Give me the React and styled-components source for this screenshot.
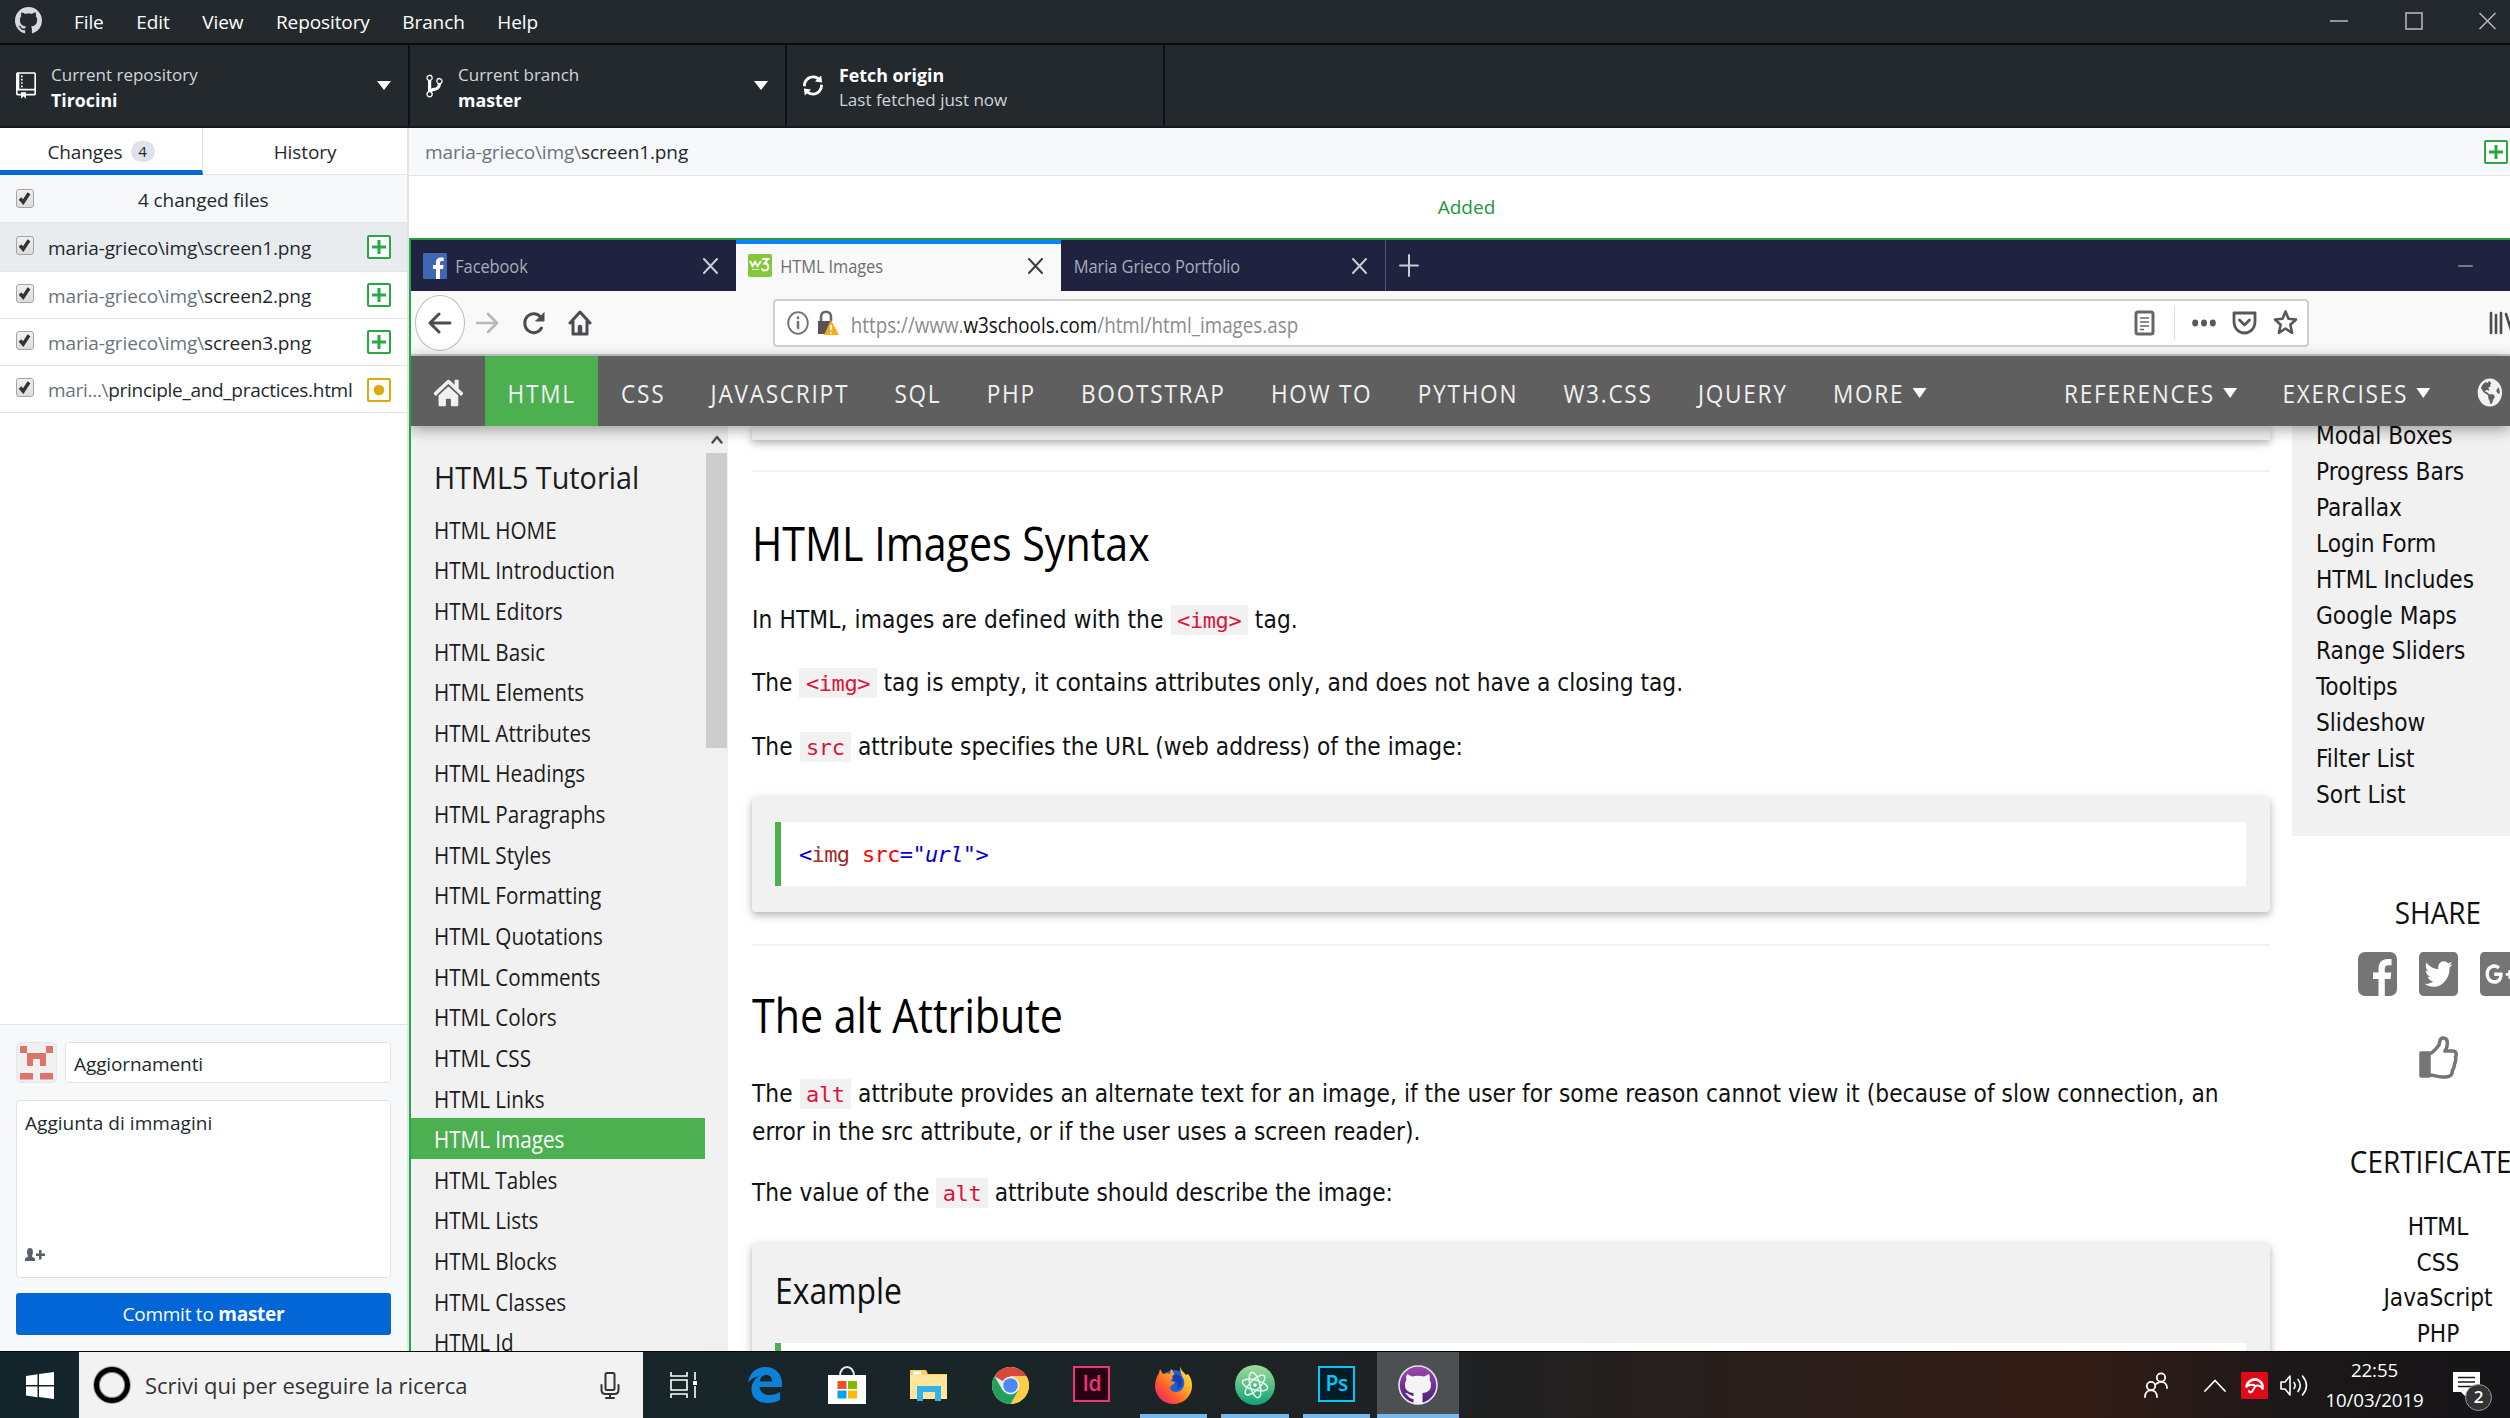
import React from "react";
import styled, { createGlobalStyle, css } from "styled-components";
import {
  FaTwitterSquare,
  FaGooglePlusSquare,
  FaHome,
  FaGlobeAmericas,
} from "react-icons/fa";

const GlobalStyle = createGlobalStyle`
  *, *::before, *::after { box-sizing: border-box; }
  body {
    margin: 0;
    overflow: hidden;
    font-family: "Open Sans", "Noto Sans", sans-serif;
    font-size: 19px;
    letter-spacing: -0.1px;
    color: #24292e;
    background: #fff;
  }
  p, h2, h3 { margin: 0; font-weight: 400; }
  svg { display: block; flex: none; }
`;

const narrow = (ratio) => css`
  display: block;
  white-space: nowrap;
  transform: scaleX(${ratio});
  transform-origin: 0 50%;
`;

/* ---------- shell ---------- */
const Screen = styled.div`
  width: 2510px;
  height: 1418px;
  display: flex;
  flex-direction: column;
  overflow: hidden;
`;
const TitleBar = styled.header`
  height: 45px;
  flex: none;
  display: flex;
  align-items: center;
  padding: 0 14px 2px 15px;
  background: #24292e;
  border-bottom: 2px solid #0b0d0f;
  color: #fff;
`;
const Menus = styled.nav`
  display: flex;
  gap: 32.6px;
  margin-left: 32px;
  padding-top: 2px;
  flex: 1;
`;
const WindowButtons = styled.div`
  display: flex;
  align-items: center;
  gap: 56.5px;
`;
const Toolbar = styled.div`
  height: 83px;
  flex: none;
  display: flex;
  background: #24292e;
  border-bottom: 2px solid #15191c;
  color: #fff;
`;
const ToolbarCell = styled.div`
  width: ${(p) => p.$width}px;
  display: flex;
  align-items: center;
  padding: 0 17px 0 16px;
  border-right: 2px solid #0f1214;
`;
const IconBox = styled.div`
  width: ${(p) => p.$width}px;
  display: flex;
`;
const CellText = styled.div`
  flex: 1;
  display: flex;
  flex-direction: column;
  padding-top: 4px;
  font-size: 17px;
  line-height: 24.5px;
  color: #d1d5da;
  letter-spacing: 0;
  strong { color: #fff; font-size: 17.8px; }
`;
const Caret = styled.i`
  width: 0;
  height: 0;
  border: ${(p) => p.$size || 7.5}px solid transparent;
  border-top: ${(p) => p.$drop || 9}px solid #fff;
  border-bottom: 0;
`;
const Body = styled.div`
  flex: 1;
  min-height: 0;
  display: flex;
`;

/* ---------- changes sidebar ---------- */
const Sidebar = styled.aside`
  width: 409px;
  flex: none;
  display: flex;
  flex-direction: column;
  border-right: 2px solid #e1e4e8;
`;
const Tabs = styled.div`
  height: 47px;
  flex: none;
  display: flex;
`;
const Tab = styled.div`
  width: ${(p) => (p.$active ? 203 : 204)}px;
  display: flex;
  align-items: center;
  justify-content: center;
  gap: 8px;
  padding-top: ${(p) => (p.$active ? 5.5 : 1)}px;
  border-right: ${(p) => (p.$active ? "1px solid #e1e4e8" : "0")};
  border-bottom: ${(p) => (p.$active ? "5px solid #0366d6" : "1px solid #e1e4e8")};
`;
const Count = styled.span`
  width: 24px;
  height: 21px;
  border-radius: 11px;
  background: #dfe2e8;
  font-size: 15px;
  line-height: 21px;
  text-align: center;
`;
const FileRow = styled.div`
  height: ${(p) => p.$height || 47.3}px;
  flex: none;
  display: flex;
  align-items: center;
  padding: ${(p) => p.$drop ?? 1}px 16px 0;
  border-bottom: 1.5px solid #e1e4e8;
  background: ${(p) => p.$bg || "#fff"};
`;
const Check = styled.span`
  width: 18px;
  height: 19px;
  margin: -4px 14px 0 0;
  border: 1.5px solid #a5a5a5;
  border-radius: 3px;
  background: linear-gradient(#f0f0f0, #dcdcdc);
`;
const FileName = styled.span`
  flex: 1;
  padding-top: 1px;
  white-space: nowrap;
  letter-spacing: ${(p) => p.$track ?? -0.12}px;
`;
const Dim = styled.span`
  color: #6a737d;
`;
const CountLabel = styled.span`
  flex: 1;
  padding-left: 90px;
`;
const StatusBox = styled.span`
  width: 24px;
  height: 24px;
  flex: none;
  display: flex;
  align-items: center;
  justify-content: center;
  border: 2px solid ${(p) => p.$color};
  border-radius: 2px;
  background: #fff;
`;
const Grow = styled.div`
  flex: 1;
`;
const CommitPanel = styled.div`
  height: 327px;
  flex: none;
  display: flex;
  flex-direction: column;
  padding: 17px 16px 16px;
  background: #f6f8fa;
  border-top: 1.5px solid #e1e4e8;
`;
const SummaryLine = styled.div`
  display: flex;
  gap: 8px;
`;
const Field = styled.div`
  border: 1.5px solid #dfe3e8;
  border-radius: 4px;
  background: #fff;
`;
const Summary = styled(Field)`
  flex: 1;
  height: 41px;
  padding: 2px 8px 0;
  line-height: 38px;
`;
const Description = styled(Field)`
  height: 178px;
  margin: 17px 0 15px;
  padding: 9px 8px 16px;
  display: flex;
  flex-direction: column;
  justify-content: space-between;
  letter-spacing: 0.04px;
`;
const CommitButton = styled.button`
  height: 42px;
  border: 0;
  border-radius: 3px;
  background: #0366d6;
  color: #fff;
  font: inherit;
  letter-spacing: -0.25px;
`;

/* ---------- file pane ---------- */
const Pane = styled.main`
  flex: 1;
  min-width: 0;
  display: flex;
  flex-direction: column;
`;
const PathBar = styled.div`
  height: 48px;
  flex: none;
  display: flex;
  align-items: center;
  padding: 0 2px 0 16px;
  background: #f6f8fa;
  border-bottom: 1.5px solid #e1e4e8;
`;
const AddedLabel = styled.div`
  height: 62px;
  flex: none;
  padding-left: 14px;
  text-align: center;
  line-height: 62px;
  color: #22963d;
  letter-spacing: 0;
`;
const Preview = styled.section`
  flex: 1;
  min-height: 0;
  display: flex;
  flex-direction: column;
  border-left: 2px solid #28a745;
  border-top: 2px solid #1f9b3b;
  overflow: hidden;
`;

/* ---------- browser chrome ---------- */
const TabStrip = styled.div`
  height: 51px;
  flex: none;
  display: flex;
  background: #202340;
  color: #a9abb8;
`;
const BrowserTab = styled.div`
  width: 325px;
  display: flex;
  align-items: center;
  padding: 0 18px 0 12px;
  border-right: ${(p) => (p.$edge ? "1.5px solid #55586e" : "0")};
  ${(p) =>
    p.$active &&
    css`
      background: #f9f9fa;
      color: #6d6d72;
      border-top: 4px solid #0a84ff;
      padding-bottom: 4px;
    `}
`;
const TabTitle = styled.span`
  flex: 1;
  padding-left: ${(p) => p.$pad}px;
  ${narrow(0.865)}
`;
const NewTab = styled.div`
  display: flex;
  flex: 1;
  align-items: center;
  justify-content: space-between;
  padding: 0 37px 0 13px;
`;
const AddressRow = styled.div`
  height: 65px;
  flex: none;
  display: flex;
  align-items: center;
  background: #f9f9fa;
  border-bottom: 2px solid #cfcfcf;
`;
const BackButton = styled.div`
  width: 50px;
  height: 56px;
  flex: none;
  margin-left: 4px;
  display: flex;
  align-items: center;
  justify-content: center;
  border: 1.5px solid #bdbdbd;
  border-radius: 50%;
  background: #fff;
`;
const NavIcons = styled.div`
  width: 308px;
  flex: none;
  display: flex;
  align-items: center;
  gap: 22.5px;
  padding-left: 10px;
`;
const AddressBox = styled.div`
  width: 1536px;
  height: 48px;
  flex: none;
  display: flex;
  align-items: center;
  padding: 0 9px 0 12px;
  border: 2px solid #d0d0d0;
  border-radius: 4px;
  background: #fff;
`;
const Url = styled.span`
  flex: 1;
  padding-left: 12px;
  padding-top: 4px;
  font-size: 21px;
  color: #8b8b8b;
  letter-spacing: 0;
  ${narrow(0.895)}
  b { font-weight: 400; color: #111; }
`;
const Divider = styled.i`
  width: 1px;
  height: 33px;
  margin: 0 17px 0 19px;
  background: #ddd;
`;
const LibrarySlot = styled.div`
  flex: none;
  margin-left: 180px;
`;

/* ---------- tutorial site ---------- */
const SiteNav = styled.nav`
  height: 70px;
  flex: none;
  position: relative;
  z-index: 1;
  background: #5f5f5f;
  box-shadow: 0 3px 14px rgba(0, 0, 0, 0.38);
`;
const SiteNavRow = styled.div`
  width: calc(100% / 0.87);
  height: 100%;
  display: flex;
  overflow: hidden;
  transform: scaleX(0.87);
  transform-origin: 0 0;
  font-size: 26px;
  font-kerning: none;
  letter-spacing: 2px;
  color: #f1f1f1;
  white-space: nowrap;
`;
const SiteNavItem = styled.div`
  flex: none;
  display: flex;
  align-items: center;
  gap: 9.5px;
  padding: 3px ${(p) => p.$pad ?? 26}px 0;
  margin-left: ${(p) => p.$gap || 0}px;
  background: ${(p) => (p.$active ? "#4caf50" : "none")};
`;
const Site = styled.div`
  flex: 1;
  min-height: 0;
  display: flex;
  overflow: hidden;
`;
const Chapters = styled.div`
  width: 294px;
  flex: none;
  padding-top: 28px;
  background: #f1f1f1;
  color: #1c1c1c;
`;
const ChaptersTitle = styled.h3`
  ${narrow(0.928)}
  margin: 0 0 8.6px 23px;
  font-size: 31px;
  line-height: 46px;
  letter-spacing: 0;
`;
const Chapter = styled.div`
  height: 40.65px;
  padding-left: 23px;
  background: ${(p) => (p.$active ? "#4caf50" : "none")};
  color: ${(p) => (p.$active ? "#fff" : "inherit")};
  span {
    ${narrow(0.88)}
    font-size: 23.5px;
    line-height: 43px;
    letter-spacing: -0.02px;
  }
`;
const ScrollTrack = styled.div`
  width: 23px;
  flex: none;
  display: flex;
  flex-direction: column;
  align-items: center;
  padding-top: 9px;
  background: #f0f0f0;
`;
const ScrollThumb = styled.i`
  width: 21px;
  height: 295px;
  margin-top: 9px;
  background: #cdcdcd;
`;
const Article = styled.article`
  width: 1518px;
  flex: none;
  margin-left: 24px;
  font-family: "DejaVu Sans Condensed", "DejaVu Sans", sans-serif;
  font-stretch: condensed;
  font-size: 24.2px;
  letter-spacing: 0;
  line-height: 38.4px;
  color: #111;
`;
const cardShadow = "0 3px 6px rgba(0,0,0,.2), 0 3px 13px rgba(0,0,0,.13)";
const CardEnd = styled.div`
  height: 14px;
  background: #f1f1f1;
  box-shadow: ${cardShadow};
`;
const Rule = styled.div`
  height: 2px;
  margin-top: ${(p) => p.$top}px;
  background: #f1f1f1;
`;
const Heading = styled.h2`
  ${narrow(0.857)}
  margin-top: ${(p) => p.$top}px;
  font-family: "Open Sans", sans-serif;
  font-stretch: normal;
  font-size: 48px;
  line-height: 72px;
  letter-spacing: 0;
  color: #000;
`;
const Para = styled.p`
  margin-top: ${(p) => p.$top ?? 25.3}px;
  letter-spacing: ${(p) => p.$track || 0}px;
  white-space: nowrap;
`;
const Code = styled.code`
  padding: 3px 6.5px 2px;
  font-family: "DejaVu Sans Mono", monospace;
  font-stretch: normal;
  font-size: 22px;
  line-height: 1;
  letter-spacing: -0.4px;
  color: #dc143c;
  background: #f1f1f1;
`;
const Card = styled.div`
  height: 115px;
  margin-top: ${(p) => p.$top}px;
  padding: ${(p) => p.$pad}px 24px 0 23px;
  border-radius: 4px;
  background: #f1f1f1;
  box-shadow: ${cardShadow};
`;
const CardTitle = styled.h3`
  ${narrow(0.885)}
  height: 79px;
  font-family: "Open Sans", sans-serif;
  font-stretch: normal;
  font-size: 36px;
  line-height: 54px;
  letter-spacing: 0;
`;
const Snippet = styled.div`
  height: 64px;
  padding-left: 18px;
  border-left: 6px solid #4caf50;
  background: #fff;
  font-family: "DejaVu Sans Mono", monospace;
  font-stretch: normal;
  font-size: 22px;
  line-height: 66px;
  letter-spacing: -0.65px;
  color: #0000cd;
`;
const TagName = styled.span`
  color: #a52a2a;
`;
const AttrName = styled.span`
  color: #f00;
`;
const Aside = styled.aside`
  width: 290px;
  flex: none;
  margin-left: 22px;
  font-family: "DejaVu Sans Condensed", "DejaVu Sans", sans-serif;
  font-stretch: condensed;
  font-size: 24.2px;
  line-height: 35.9px;
  letter-spacing: 0;
  color: #111;
`;
const HowToList = styled.div`
  height: 410px;
  padding: 0 0 22px 24px;
  background: #f1f1f1;
  overflow: hidden;
  display: flex;
  flex-direction: column;
  justify-content: flex-end;
  white-space: nowrap;
  div { flex: none; }
`;
const Centered = styled.div`
  display: flex;
  flex-direction: column;
  align-items: center;
  padding-left: 2px;
  line-height: 35.7px;
`;
const AsideTitle = styled.h3`
  margin-top: ${(p) => p.$top}px;
  font-family: "Open Sans", sans-serif;
  font-stretch: normal;
  font-size: 31px;
  line-height: 46px;
  letter-spacing: 0;
  transform: scaleX(0.9);
`;
const ShareRow = styled.div`
  display: flex;
  gap: 22px;
  margin: 17px 0 40px;
  color: #757575;
  svg { width: 39px; height: 44px; }
`;
const Certificates = styled.div`
  margin-top: 26px;
  display: flex;
  flex-direction: column;
  align-items: center;
`;

/* ---------- taskbar ---------- */
const Taskbar = styled.footer`
  height: 67px;
  flex: none;
  display: flex;
  border-top: 1.5px solid #050808;
  background: linear-gradient(90deg, #13252b 0, #1a2528 40%, #212122 60%, #301d17 78%, #331d16 83%, #1c1718 91%, #151517 100%);
  color: #fff;
`;
const StartButton = styled.div`
  width: 79px;
  display: flex;
  align-items: center;
  justify-content: center;
`;
const SearchBox = styled.div`
  width: 564px;
  display: flex;
  align-items: center;
  padding: 0 23px 0 15px;
  background: #f2f2f2;
  color: #333;
`;
const CortanaRing = styled.i`
  width: 36px;
  height: 36px;
  border: 5px solid #000;
  border-radius: 50%;
  box-shadow: inset 0 0 0 1px #888, 0 0 0 1px #aaa;
`;
const SearchHint = styled.span`
  flex: 1;
  padding-left: 15px;
  font-size: 22px;
  letter-spacing: -0.05px;
`;
const AppSlot = styled.div`
  width: 81.6px;
  display: flex;
  flex-direction: column;
  align-items: center;
  justify-content: center;
  background: ${(p) => (p.$focused ? "#4c5052" : "none")};
  box-shadow: ${(p) => (p.$focused ? "inset 0 -4px #76b9ed" : "none")};
  position: relative;
`;
const RunningMark = styled.i`
  position: absolute;
  left: 7px;
  right: 7px;
  bottom: 0;
  height: 4px;
  background: #76b9ed;
`;
const AdobeTile = styled.div`
  width: 37px;
  height: 36px;
  margin-bottom: 2px;
  border: 2px solid ${(p) => p.$ink};
  background: ${(p) => p.$paper};
  color: ${(p) => p.$ink};
  font-size: 21px;
  font-weight: 600;
  line-height: 30px;
  text-align: center;
  letter-spacing: -0.5px;
`;
const Tray = styled.div`
  flex: 1;
  display: flex;
  align-items: center;
  justify-content: flex-end;
`;
const TrayItem = styled.div`
  margin-left: ${(p) => p.$gap}px;
`;
const Clock = styled.div`
  width: 103px;
  margin-left: 15px;
  display: flex;
  flex-direction: column;
  align-items: center;
  font-size: 18.7px;
  line-height: 30px;
`;
const Notifications = styled.div`
  position: relative;
  margin: 0 30px 0 27px;
`;
const Badge = styled.span`
  position: absolute;
  left: 12px;
  top: 12px;
  width: 27px;
  height: 27px;
  border: 1.5px solid #9a9a9a;
  border-radius: 50%;
  background: #333;
  font-size: 17px;
  font-weight: 600;
  line-height: 23px;
  text-align: center;
`;

/* ---------- drawings ---------- */
const OCTOCAT =
  "M8 0C3.58 0 0 3.58 0 8c0 3.54 2.29 6.53 5.47 7.59.4.07.55-.17.55-.38 0-.19-.01-.82-.01-1.49-2.01.37-2.53-.49-2.69-.94-.09-.23-.48-.94-.82-1.13-.28-.15-.68-.52-.01-.53.63-.01 1.08.58 1.23.82.72 1.21 1.87.87 2.33.66.07-.52.28-.87.51-1.07-1.78-.2-3.64-.89-3.64-3.95 0-.87.31-1.59.82-2.15-.08-.2-.36-1.02.08-2.12 0 0 .67-.21 2.2.82.64-.18 1.32-.27 2-.27.68 0 1.36.09 2 .27 1.53-1.04 2.2-.82 2.2-.82.44 1.1.16 1.92.08 2.12.51.56.82 1.27.82 2.15 0 3.07-1.87 3.75-3.65 3.95.29.25.54.73.54 1.48 0 1.07-.01 1.93-.01 2.2 0 .21.15.46.55.38A8.013 8.013 0 0016 8c0-4.42-3.58-8-8-8z";
const REPO =
  "M4 9H3V8h1v1zm0-3H3v1h1V6zm0-2H3v1h1V4zm0-2H3v1h1V2zm8-1v12c0 .55-.45 1-1 1H6v2l-1.5-1.5L3 16v-2H1c-.55 0-1-.45-1-1V1c0-.55.45-1 1-1h10c.55 0 1 .45 1 1zm-1 10H1v2h2v-1h3v1h5v-2zm0-10H2v9h9V1z";
const BRANCH =
  "M10 5c0-1.11-.89-2-2-2a1.993 1.993 0 00-1 3.72v.3c-.02.52-.23.98-.63 1.38-.4.4-.86.61-1.38.63-.83.02-1.48.16-2 .45V4.72a1.993 1.993 0 00-1-3.72C.88 1 0 1.89 0 3a2 2 0 001 1.72v6.56c-.59.35-1 .99-1 1.72 0 1.11.89 2 2 2 1.11 0 2-.89 2-2 0-.53-.2-1-.53-1.36.09-.06.48-.41.59-.47.25-.11.56-.17.94-.17 1.05-.05 1.95-.45 2.75-1.25S8.95 7.77 9 6.73h-.02C9.59 6.37 10 5.73 10 5zM2 1.8c.66 0 1.2.55 1.2 1.2 0 .65-.55 1.2-1.2 1.2C1.35 4.2.8 3.65.8 3c0-.65.55-1.2 1.2-1.2zm0 12.41c-.66 0-1.2-.55-1.2-1.2 0-.65.55-1.2 1.2-1.2.65 0 1.2.55 1.2 1.2 0 .65-.55 1.2-1.2 1.2zm6-8c-.66 0-1.2-.55-1.2-1.2 0-.65.55-1.2 1.2-1.2.65 0 1.2.55 1.2 1.2 0 .65-.55 1.2-1.2 1.2z";
const SYNC =
  "M10.24 7.4a4.15 4.15 0 01-1.2 3.6 4.346 4.346 0 01-5.41.54L4.8 10.4.5 9.8l.6 4.2 1.31-1.26c2.36 1.74 5.7 1.57 7.84-.54a5.876 5.876 0 001.74-4.46l-1.75-.34zM2.96 5a4.346 4.346 0 015.41-.54L7.2 5.6l4.3.6-.6-4.2-1.31 1.26c-2.36-1.74-5.7-1.57-7.85.54C.5 5.03-.06 6.65.01 8.26l1.75.35A4.17 4.17 0 012.96 5z";

const Glyph = ({ w, h, box, color = "#fff", d }) => (
  <svg width={w} height={h} viewBox={box} fill={color}>
    <path d={d} />
  </svg>
);
const Line = ({ w, h, box, color = "#4c4c4f", width = 2, fill = "none", children }) => (
  <svg
    width={w}
    height={h}
    viewBox={box}
    preserveAspectRatio="none"
    fill={fill}
    stroke={color}
    strokeWidth={width}
    strokeLinecap="round"
    strokeLinejoin="round"
  >
    {children}
  </svg>
);
const Cross = ({ color }) => (
  <Line w={15} h={16} box="0 0 15 16" color={color}>
    <path d="M1 1l13 14M14 1L1 15" />
  </Line>
);
const CheckBox = () => (
  <Check>
    <svg width="15" height="16" viewBox="0 0 15 16" fill="none" stroke="#333" strokeWidth="3.4">
      <path d="M3 8.5l3.2 3.6L12 3.2" />
    </svg>
  </Check>
);
const Added = () => (
  <StatusBox $color="#28a745">
    <svg width="14" height="14" viewBox="0 0 14 14" stroke="#28a745" strokeWidth="3">
      <path d="M7 0v14M0 7h14" />
    </svg>
  </StatusBox>
);
const Modified = () => (
  <StatusBox $color="#dbab09">
    <svg width="12" height="12" viewBox="0 0 12 12" fill="#dbab09">
      <circle cx="6" cy="6" r="5.3" />
    </svg>
  </StatusBox>
);
const Avatar = () => (
  <svg width="41" height="41" viewBox="0 0 41 41">
    <rect x=".7" y=".7" width="39.6" height="39.6" rx="4" fill="#f0f0f0" stroke="#dfe3e8" />
    <path
      fill="#dc736d"
      d="M4 4h7v7h19V4h7v7h-7v13h-6v-7h-7v7h-6V11H4zM4 31h13v6.500H4zM24 31h13v6.500H24z"
    />
  </svg>
);
const W3Badge = () => (
  <svg width="24" height="23" viewBox="0 0 24 23">
    <rect width="24" height="23" rx="2" fill="#84c73b" />
    <g fill="none" stroke="#fff" strokeWidth="2">
      <path d="M2 7l2.500 5L7 8l2.500 4L13 7" />
      <path d="M14 5h6l-3.500 4.500c5 0 5 7 .5 7-2 0-3-1-3.400-2" />
      <path d="M4 15.500h7" strokeWidth="1" opacity=".7" />
    </g>
  </svg>
);
const FacebookBadge = () => (
  <svg width="24" height="26" viewBox="0 0 24 26">
    <rect width="24" height="26" rx="1" fill="#4267b2" />
    <path d="M13 26V16h-3v-4h3V9.500C13 6 15 4.500 18 4.500h2.700V8H19c-1.500 0-2 .7-2 2v2h3.600l-.5 4H17v10z" fill="#fff" />
  </svg>
);
const FacebookTile = () => (
  <svg viewBox="0 0 39 44">
    <rect width="39" height="44" rx="7" fill="#757575" />
    <path d="M20.500 44V27H15v-6.500h5.500V17c0-6.500 3.500-10 9-10h4v6.200h-3.200c-2.800 0-3.500 1.300-3.500 3.800v3.500h6.500L32.500 27h-5.700v17z" fill="#fff" />
  </svg>
);
const Edge = () => (
  <svg width="34" height="36" viewBox="0 0 34 36">
    <path
      fill="#0d80d8"
      d="M0 15.500C1.500 6 8 0 17.500 0 27.500 0 34 7 34 16.500V20H11.500c.3 5 4.500 8 10 8 4 0 7.500-1 10.500-3v8c-3.500 2-7.500 3-12.500 3C9.500 36 3.500 30.500 3.500 22c0-5.500 3-10.500 8-13C6.500 10 3 12 0 15.500zM11.700 14.500h12.500c0-4-2.200-6.500-6-6.500-3.700 0-6 2.700-6.500 6.500z"
    />
  </svg>
);
const Store = () => (
  <svg width="38" height="38" viewBox="0 0 38 38">
    <path d="M12 10c0-12 14-12 14 0" fill="none" stroke="#e8e8e8" strokeWidth="2" />
    <path d="M0 9h38v29H0z" fill="#fff" />
    <path d="M9.500 15h9v8h-9z" fill="#f25022" />
    <path d="M20 15h9v8h-9z" fill="#7fba00" />
    <path d="M9.500 24.500h9v8h-9z" fill="#00a4ef" />
    <path d="M20 24.500h9v8h-9z" fill="#ffb900" />
  </svg>
);
const Explorer = () => (
  <svg width="37" height="32" viewBox="0 0 37 32">
    <path d="M0 1h16l2 4h19v25H0z" fill="#f6cf63" />
    <path d="M0 6h37v24H0z" fill="#ffe69b" />
    <path d="M3 2.500h8v3H3z" fill="#fff" />
    <path d="M7 32V17h24v15h-6v-9H13v9z" fill="#35b2ea" />
  </svg>
);
const Chrome = () => (
  <svg width="37" height="37" viewBox="0 0 37 37">
    <circle cx="18.500" cy="18.500" r="18.500" fill="#e5e5e5" />
    <path d="M18.500 18.500L2.500 9.250A18.500 18.500 0 0 1 34.500 9.250H18.500z" fill="#d8493c" />
    <path d="M18.500 9.250H34.500A18.500 18.500 0 0 1 18.500 37L26.500 23z" fill="#fccd49" />
    <path d="M2.500 9.250A18.500 18.500 0 0 0 18.500 37L26.500 23 10.500 23z" fill="#229f5d" />
    <circle cx="18.500" cy="18.500" r="9" fill="#f1f1f1" />
    <circle cx="18.500" cy="18.500" r="7.300" fill="#4a8af4" />
  </svg>
);
const Firefox = () => (
  <svg width="37" height="38" viewBox="0 0 37 38">
    <defs>
      <linearGradient id="flame" x1="1" y1="0" x2="0" y2="1">
        <stop offset="0" stopColor="#fff44f" />
        <stop offset=".35" stopColor="#ffb02a" />
        <stop offset=".65" stopColor="#ff5b2c" />
        <stop offset="1" stopColor="#e31587" />
      </linearGradient>
    </defs>
    <circle cx="19" cy="18" r="14" fill="#1d5fd6" />
    <path
      fill="url(#flame)"
      d="M25 0c1 5 4 6 6 9l2-1c3 4 4 7 4 12 0 10-8 18-18.500 18S0 30 0 20c0-6 2-10 4-13l1-4 3 5c3-1 5-1 7 0l1-5c3 3 3 6 5 8-3 0-5 2-5 4 2 1 4 1 4 1-1 3-5 3-5 6 1 4 6 5 10 3 5-3 5-9 3-13-2-3-3-7-3-12z"
    />
    <path d="M17 10c4-3 9-1 10 4 1 6-3 9-6 9 3-4 1-7-2-8z" fill="#1b3fae" />
  </svg>
);
const Atom = () => (
  <svg width="40" height="40" viewBox="0 0 40 40">
    <defs>
      <linearGradient id="leaf" x1="0" y1="0" x2="0" y2="1">
        <stop offset="0" stopColor="#9fdc9a" />
        <stop offset="1" stopColor="#12a176" />
      </linearGradient>
    </defs>
    <circle cx="20" cy="20" r="20" fill="url(#leaf)" />
    <g fill="none" stroke="#e6f7ee" strokeWidth="1.500">
      <ellipse cx="20" cy="20" rx="13" ry="5" transform="rotate(15 20 20)" />
      <ellipse cx="20" cy="20" rx="13" ry="5" transform="rotate(75 20 20)" />
      <ellipse cx="20" cy="20" rx="13" ry="5" transform="rotate(135 20 20)" />
    </g>
    <circle cx="20" cy="20" r="1.800" fill="#fff" />
  </svg>
);
const GitHubApp = () => (
  <svg width="40" height="40" viewBox="0 0 40 40">
    <defs>
      <linearGradient id="plum" x1="0" y1="0" x2="0" y2="1">
        <stop offset="0" stopColor="#9d49ad" />
        <stop offset="1" stopColor="#4c1d74" />
      </linearGradient>
    </defs>
    <circle cx="20" cy="20" r="19" fill="url(#plum)" stroke="#e8e0ee" strokeWidth="1.600" />
    <path
      fill="#f4f4f4"
      d="M9 9l5 2.500c4-1 8-1 12 0L31 9c1 2 1 4 .6 6 1.400 2 1.700 4 1.200 7-.8 4-4 5.500-8.300 6v11h-9v-5c-5 0-5-4-8.500-5.500 4-1 4.500 2.500 8.500 2.500v-3c-4-.5-7.500-2-8.300-6-.5-3-.2-5 1.200-7C8 13 8 11 9 9z"
    />
  </svg>
);
const TaskView = () => (
  <svg width="28" height="26" viewBox="0 0 28 26" fill="none" stroke="#fff" strokeWidth="1.600">
    <path d="M1 0v4h16V0M1 8h16v10H1zM1 26v-4h16v4M25 0v8M25 14v12" />
    <path d="M23 9h4v4h-4z" fill="#fff" stroke="none" />
  </svg>
);

/* ---------- data ---------- */
const menus = ["File", "Edit", "View", "Repository", "Branch", "Help"];
const files = [
  { dir: "maria-grieco\\img\\", name: "screen1.png", selected: true },
  { dir: "maria-grieco\\img\\", name: "screen2.png" },
  { dir: "maria-grieco\\img\\", name: "screen3.png" },
  { dir: "mari...\\", name: "principle_and_practices.html", modified: true },
];
const topics = ["CSS", "JAVASCRIPT", "SQL", "PHP", "BOOTSTRAP", "HOW TO", "PYTHON", "W3.CSS", "JQUERY"];
const chapters = [
  "HOME", "Introduction", "Editors", "Basic", "Elements", "Attributes", "Headings", "Paragraphs",
  "Styles", "Formatting", "Quotations", "Comments", "Colors", "CSS", "Links", "Images", "Tables",
  "Lists", "Blocks", "Classes", "Id",
];
const howTos = [
  "Modal Boxes", "Progress Bars", "Parallax", "Login Form", "HTML Includes", "Google Maps",
  "Range Sliders", "Tooltips", "Slideshow", "Filter List", "Sort List",
];
const certificates = ["HTML", "CSS", "JavaScript", "PHP"];

function ChangesSidebar() {
  return (
    <Sidebar>
      <Tabs>
        <Tab $active>
          Changes <Count>4</Count>
        </Tab>
        <Tab>History</Tab>
      </Tabs>
      <FileRow $height={47.5} $bg="#f6f8fa" $drop={4}>
        <CheckBox />
        <CountLabel>4 changed files</CountLabel>
      </FileRow>
      {files.map((f) => (
        <FileRow key={f.name} $bg={f.selected ? "#e9ecef" : "#fff"} $height={f.selected ? 49 : 47.3}>
          <CheckBox />
          <FileName $track={f.modified ? -0.3 : -0.12}>
            {f.selected ? f.dir : <Dim>{f.dir}</Dim>}
            {f.name}
          </FileName>
          {f.modified ? <Modified /> : <Added />}
        </FileRow>
      ))}
      <Grow />
      <CommitPanel>
        <SummaryLine>
          <Avatar />
          <Summary>Aggiornamenti</Summary>
        </SummaryLine>
        <Description>
          Aggiunta di immagini
          <svg width="20" height="13" viewBox="0 0 20 13" fill="#586069">
            <path d="M0 13v-2c0-1.500 3-1.500 3-3C1.500 5 1.500 0 5 0s3.500 5 2 8c0 1.500 3 1.500 3 3v2zM14 2h2.500v3.500H20V8h-3.500v3.500H14V8h-3V5.500h3z" />
          </svg>
        </Description>
        <CommitButton>
          Commit to <strong>master</strong>
        </CommitButton>
      </CommitPanel>
    </Sidebar>
  );
}

function BrowserChrome() {
  return (
    <>
      <TabStrip>
        <BrowserTab>
          <FacebookBadge />
          <TabTitle $pad={9.500}>Facebook</TabTitle>
          <Cross color="#c9cad3" />
        </BrowserTab>
        <BrowserTab $active>
          <W3Badge />
          <TabTitle $pad={9.500}>HTML Images</TabTitle>
          <Cross color="#3d3d40" />
        </BrowserTab>
        <BrowserTab $edge>
          <TabTitle $pad={1}>Maria Grieco Portfolio</TabTitle>
          <Cross color="#c9cad3" />
        </BrowserTab>
        <NewTab>
          <Line w={20} h={23} box="0 0 20 23" color="#c9cad3">
            <path d="M10 1v21M1 11.500h18" />
          </Line>
          <Line w={15} h={4} box="0 0 15 4" color="#75778a">
            <path d="M1 2h13" />
          </Line>
        </NewTab>
      </TabStrip>
      <AddressRow>
        <BackButton>
          <Line w={24} h={22} box="0 0 24 22" width={3}>
            <path d="M2 11h20M11 2l-9 9 9 9" />
          </Line>
        </BackButton>
        <NavIcons>
          <Line w={24} h={22} box="0 0 24 22" width={2.600} color="#b8b8ba">
            <path d="M2 11h20M13 2l9 9-9 9" />
          </Line>
          <Line w={24} h={24} box="0 0 24 24" width={3}>
            <path d="M19.500 17A9 9.500 0 1 1 19 6.500" />
            <path d="M22 2v8h-8z" fill="#4c4c4f" strokeWidth="1" />
          </Line>
          <Line w={24} h={27} box="0 0 24 27" width={3}>
            <path d="M2 14L12 3l10 11M5 12v13h14V12" />
            <path d="M12 24v-6" strokeWidth="4.500" />
          </Line>
        </NavIcons>
        <AddressBox>
          <Line w={22} h={24} box="0 0 22 24" color="#737373" width={1.800}>
            <ellipse cx="11" cy="12" rx="9.800" ry="10.800" />
            <path d="M11 11v6M11 6.500v.5" strokeWidth="2.600" />
          </Line>
          <TrayItem $gap={7}>
            <svg width="24" height="26" viewBox="0 0 24 26">
              <path d="M5 12V7c0-7 10-7 10 0v4" fill="none" stroke="#666" strokeWidth="2.600" />
              <path d="M2 11h14v13H2z" fill="#555" />
              <path d="M15 10l8 15H8z" fill="#ffa91c" />
              <path d="M15 15v5M15 22v1.500" stroke="#fff" strokeWidth="1.800" />
            </svg>
          </TrayItem>
          <Url>
            https://www.<b>w3schools.com</b>/html/html_images.asp
          </Url>
          <Line w={21} h={26} box="0 0 21 26" color="#666" width={3}>
            <rect x="2" y="2" width="17" height="22" rx="2" />
            <path d="M6.500 8h8M6.500 12h8M6.500 16h8M6.500 19.500h3" strokeWidth="1.500" />
          </Line>
          <Divider />
          <svg width="24" height="8" viewBox="0 0 24 8" fill="#58585b">
            <ellipse cx="3.200" cy="4" rx="3" ry="3.400" />
            <ellipse cx="12" cy="4" rx="3" ry="3.400" />
            <ellipse cx="20.800" cy="4" rx="3" ry="3.400" />
          </svg>
          <TrayItem $gap={16}>
            <Line w={25} h={24} box="0 0 25 24" color="#58585b" width={2.800}>
              <path d="M2 2h21v8c0 16-21 16-21 0zM7.500 9l5 5 5-5" />
            </Line>
          </TrayItem>
          <TrayItem $gap={16}>
            <Line w={25} h={27} box="0 0 25 27" color="#58585b" width={2.600}>
              <path d="M12.500 2.500l3 7.300 7.500.7-5.700 5.300 1.800 8-6.600-4.300-6.600 4.300 1.800-8L2 10.500l7.500-.7z" />
            </Line>
          </TrayItem>
        </AddressBox>
        <LibrarySlot>
          <Line w={30} h={24} box="0 0 30 24" width={2.600}>
            <path d="M2 2v20M7 4v18M12 2v20M17 3l6 19" />
          </Line>
        </LibrarySlot>
      </AddressRow>
    </>
  );
}

function TutorialSite() {
  return (
    <>
      <SiteNav>
        <SiteNavRow>
          <SiteNavItem $pad={25.500}>
            <FaHome size={34} />
          </SiteNavItem>
          <SiteNavItem $active>HTML</SiteNavItem>
          {topics.map((t) => (
            <SiteNavItem key={t}>{t}</SiteNavItem>
          ))}
          <SiteNavItem>
            MORE <Caret $size={8.500} $drop={10} />
          </SiteNavItem>
          <SiteNavItem $gap={106}>
            REFERENCES <Caret $size={8.500} $drop={10} />
          </SiteNavItem>
          <SiteNavItem>
            EXERCISES <Caret $size={8.500} $drop={10} />
          </SiteNavItem>
          <SiteNavItem $pad={28}>
            <FaGlobeAmericas size={29} />
          </SiteNavItem>
        </SiteNavRow>
      </SiteNav>
      <Site>
        <Chapters>
          <ChaptersTitle>HTML5 Tutorial</ChaptersTitle>
          {chapters.map((c) => (
            <Chapter key={c} $active={c === "Images"}>
              <span>HTML {c}</span>
            </Chapter>
          ))}
        </Chapters>
        <ScrollTrack>
          <Line w={12} h={9} box="0 0 12 9" color="#505050" width={2.400}>
            <path d="M1.500 7.500L6 2l4.500 5.500" />
          </Line>
          <ScrollThumb />
        </ScrollTrack>
        <Article>
          <CardEnd />
          <Rule $top={30} />
          <Heading $top={34.600}>HTML Images Syntax</Heading>
          <Para $top={22} $track={0.120}>
            In HTML, images are defined with the <Code>&lt;img&gt;</Code> tag.
          </Para>
          <Para>
            The <Code>&lt;img&gt;</Code> tag is empty, it contains attributes only, and does not have a closing tag.
          </Para>
          <Para $track={0.030}>
            The <Code>src</Code> attribute specifies the URL (web address) of the image:
          </Para>
          <Card $top={30.900} $pad={25}>
            <Snippet>
              &lt;<TagName>img</TagName> <AttrName>src</AttrName>="<i>url</i>"&gt;
            </Snippet>
          </Card>
          <Rule $top={31.500} />
          <Heading $top={33.500}>The alt Attribute</Heading>
          <Para $top={23.500} $track={0.040}>
            The <Code>alt</Code> attribute provides an alternate text for an image, if the user for some reason
            cannot view it (because of slow connection, an
            <br />
            error in the src attribute, or if the user uses a screen reader).
          </Para>
          <Para $top={22}>
            The value of the <Code>alt</Code> attribute should describe the image:
          </Para>
          <Card $top={31} $pad={21}>
            <CardTitle>Example</CardTitle>
            <Snippet />
          </Card>
        </Article>
        <Aside>
          <HowToList>
            {howTos.map((h) => (
              <div key={h}>{h}</div>
            ))}
          </HowToList>
          <Centered>
            <AsideTitle $top={53}>SHARE</AsideTitle>
            <ShareRow>
              <FacebookTile />
              <FaTwitterSquare viewBox="0 32 448 448" preserveAspectRatio="none" />
              <FaGooglePlusSquare viewBox="0 32 448 448" preserveAspectRatio="none" />
            </ShareRow>
            <Line w={39} h={44} box="0 0 39 44" color="#757575" width={3.500}>
              <path d="M2 17h8v23H2z" fill="#757575" />
              <path d="M10 18c4-1 7-5 10-9 1-3 0-7 4-7 6 0 5 8 2 13h8c3 0 4 3 2.500 6 1 3 0 5-1 7 0 3 0 4-2 6 0 6-3 7-10 7-6 0-8-2-13-2" />
            </Line>
            <AsideTitle $top={58}>CERTIFICATES</AsideTitle>
            <Certificates>
              {certificates.map((c) => (
                <div key={c}>{c}</div>
              ))}
            </Certificates>
          </Centered>
        </Aside>
      </Site>
    </>
  );
}

function WindowsTaskbar() {
  return (
    <Taskbar>
      <StartButton>
        <svg width="28" height="27" viewBox="0 0 28 27" fill="#fff">
          <path d="M0 4l11.500-1.700V13H0zM13 2l15-2v13H13zM0 14.500h11.500v10.700L0 23.500zM13 14.500h15V27l-15-2z" />
        </svg>
      </StartButton>
      <SearchBox>
        <CortanaRing />
        <SearchHint>Scrivi qui per eseguire la ricerca</SearchHint>
        <Line w={20} h={27} box="0 0 20 27" color="#333">
          <rect x="5.500" y="1" width="9" height="17" rx="1.500" />
          <path d="M1.500 13v5c0 3 2 4 4 4h9c2 0 4-1 4-4v-5M10 22v4M6 26h8" />
        </Line>
      </SearchBox>
      <AppSlot><TaskView /></AppSlot>
      <AppSlot><Edge /></AppSlot>
      <AppSlot><Store /></AppSlot>
      <AppSlot><Explorer /></AppSlot>
      <AppSlot><Chrome /></AppSlot>
      <AppSlot><AdobeTile $ink="#f0347f" $paper="#26000f">Id</AdobeTile></AppSlot>
      <AppSlot><Firefox /><RunningMark /></AppSlot>
      <AppSlot><Atom /><RunningMark /></AppSlot>
      <AppSlot><AdobeTile $ink="#00c8ff" $paper="#001d26">Ps</AdobeTile><RunningMark /></AppSlot>
      <AppSlot $focused><GitHubApp /></AppSlot>
      <Tray>
        <Line w={24} h={26} box="0 0 24 26" color="#fff" width={1.800}>
          <circle cx="17" cy="5.500" r="4.200" />
          <circle cx="7" cy="14" r="4.200" />
          <path d="M1 25c0-9 12-9 12 0M12 12c5-4 11-2 11 4" />
        </Line>
        <TrayItem $gap={36}>
          <Line w={22} h={13} box="0 0 22 13" color="#fff" width={1.800}>
            <path d="M1 12L11 1.500 21 12" />
          </Line>
        </TrayItem>
        <TrayItem $gap={15}>
          <svg width="27" height="27" viewBox="0 0 27 27">
            <rect width="27" height="27" rx="1.500" fill="#e10915" />
            <g fill="none" stroke="#fff" strokeLinecap="round">
              <path d="M5.500 14.500C7 8 14 5.500 18.500 9c2.500 2 3.500 4.500 3 7.500" strokeWidth="2.600" />
              <path d="M5.500 14.500c3-2 6.500-2 9-.5 2.500-1 5.500 0 7 2.500" strokeWidth="2" />
              <path d="M14.500 14l-3.500 5.500c-1 1.500-2.800 1-3-.5" strokeWidth="2" />
            </g>
          </svg>
        </TrayItem>
        <TrayItem $gap={12}>
          <Line w={28} h={23} box="0 0 28 23" color="#fff" width={1.600}>
            <path d="M1 8h4l5-6v19l-5-6H1zM14 8.500c1.500 2 1.500 4 0 6M18 5.500c3 4 3 8 0 12M22.500 2c5 6 5 13 0 19" />
          </Line>
        </TrayItem>
        <Clock>
          <span>22:55</span>
          <span>10/03/2019</span>
        </Clock>
        <Notifications>
          <svg width="27" height="26" viewBox="0 0 27 26">
            <path d="M0 0h27v20H14v6l-6-6H0z" fill="#fff" />
            <path d="M5 5.500h17M5 10h17M5 14.500h17" stroke="#1a1818" strokeWidth="1.500" />
          </svg>
          <Badge>2</Badge>
        </Notifications>
      </Tray>
    </Taskbar>
  );
}

export default function App() {
  return (
    <Screen>
      <GlobalStyle />
      <TitleBar>
        <Glyph w={27} h={27} box="0 0 16 16" color="#d6d9dd" d={OCTOCAT} />
        <Menus>
          {menus.map((m) => (
            <span key={m}>{m}</span>
          ))}
        </Menus>
        <WindowButtons>
          <svg width="18" height="18" viewBox="0 0 18 18" stroke="#b9bbbd" strokeWidth="1.500">
            <path d="M0 9h18" />
          </svg>
          <svg width="18" height="18" viewBox="0 0 18 18" fill="none" stroke="#b9bbbd" strokeWidth="1.500">
            <path d="M1 1h16v16H1z" />
          </svg>
          <svg width="17" height="18" viewBox="0 0 17 18" stroke="#b9bbbd" strokeWidth="1.500">
            <path d="M.5 1l16 16M16.500 1l-16 16" />
          </svg>
        </WindowButtons>
      </TitleBar>
      <Toolbar>
        <ToolbarCell $width={410}>
          <IconBox $width={35}>
            <Glyph w={20} h={27} box="0 0 12 16" d={REPO} />
          </IconBox>
          <CellText>
            Current repository
            <strong>Tirocini</strong>
          </CellText>
          <Caret />
        </ToolbarCell>
        <ToolbarCell $width={377}>
          <IconBox $width={32}>
            <Glyph w={17} h={26} box="0 0 10 16" d={BRANCH} />
          </IconBox>
          <CellText>
            Current branch
            <strong>master</strong>
          </CellText>
          <Caret />
        </ToolbarCell>
        <ToolbarCell $width={378}>
          <IconBox $width={36}>
            <Glyph w={20} h={27} box="0 0 12 16" d={SYNC} />
          </IconBox>
          <CellText>
            <strong>Fetch origin</strong>
            Last fetched just now
          </CellText>
        </ToolbarCell>
      </Toolbar>
      <Body>
        <ChangesSidebar />
        <Pane>
          <PathBar>
            <FileName>
              <Dim>maria-grieco\img\</Dim>screen1.png
            </FileName>
            <Added />
          </PathBar>
          <AddedLabel>Added</AddedLabel>
          <Preview>
            <BrowserChrome />
            <TutorialSite />
          </Preview>
        </Pane>
      </Body>
      <WindowsTaskbar />
    </Screen>
  );
}
